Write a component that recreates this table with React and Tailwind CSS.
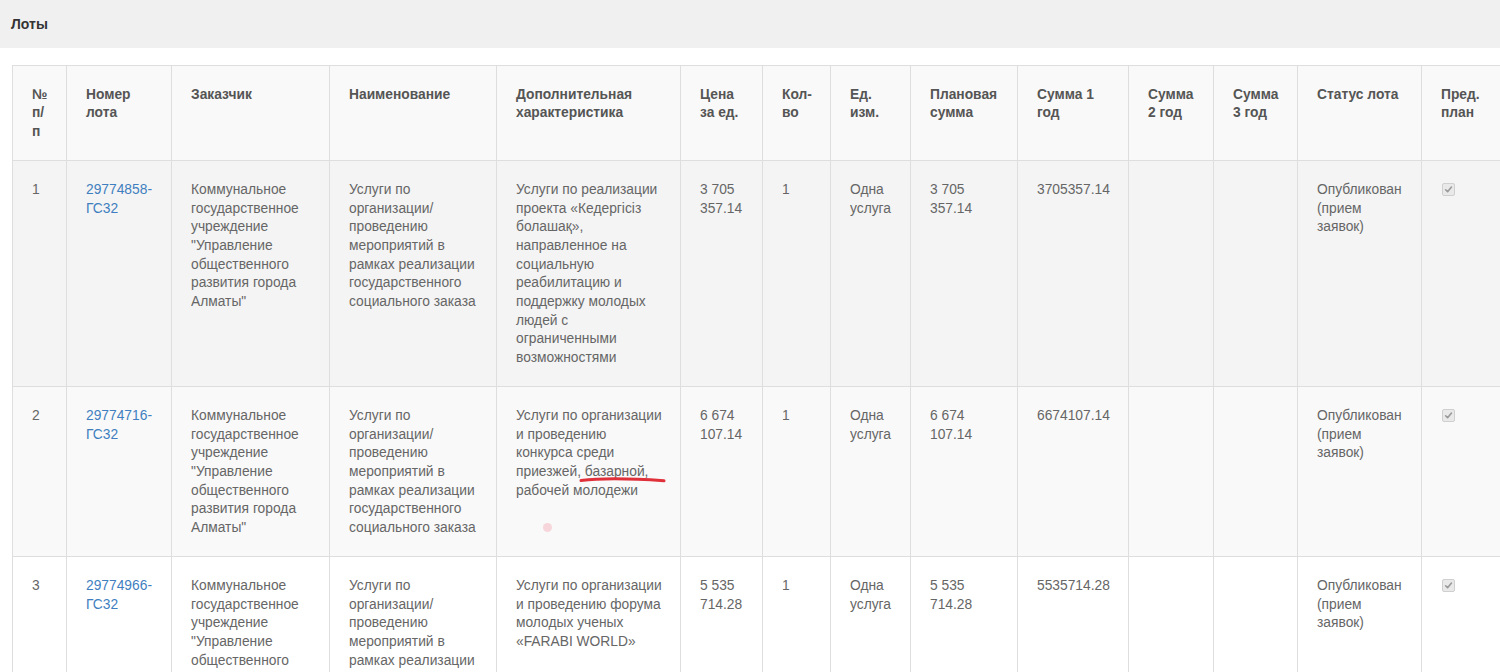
import React from "react";

const cols = [54, 105, 158, 167, 184, 82, 68, 80, 107, 111, 85, 84, 124, 90];

const headers = [
  ["№", "п/", "п"],
  ["Номер", "лота"],
  ["Заказчик"],
  ["Наименование"],
  ["Дополнительная", "характеристика"],
  ["Цена", "за ед."],
  ["Кол-", "во"],
  ["Ед.", "изм."],
  ["Плановая", "сумма"],
  ["Сумма 1", "год"],
  ["Сумма", "2 год"],
  ["Сумма", "3 год"],
  ["Статус лота"],
  ["Пред.", "план"],
];

const customer = [
  "Коммунальное",
  "государственное",
  "учреждение",
  '"Управление',
  "общественного",
  "развития города",
  'Алматы"',
];
const name = [
  "Услуги по",
  "организации/",
  "проведению",
  "мероприятий в",
  "рамках реализации",
  "государственного",
  "социального заказа",
];
const status = ["Опубликован", "(прием", "заявок)"];

const rows = [
  {
    n: "1",
    lot: ["29774858-", "ГС32"],
    extra: [
      "Услуги по реализации",
      "проекта «Кедергісіз",
      "болашақ»,",
      "направленное на",
      "социальную",
      "реабилитацию и",
      "поддержку молодых",
      "людей с",
      "ограниченными",
      "возможностями",
    ],
    price: ["3 705", "357.14"],
    sum1: "3705357.14",
    bg: "bg-[#f4f4f4]",
  },
  {
    n: "2",
    lot: ["29774716-", "ГС32"],
    extra: [
      "Услуги по организации",
      "и проведению",
      "конкурса среди",
      "приезжей, базарной,",
      "рабочей молодежи",
    ],
    price: ["6 674", "107.14"],
    sum1: "6674107.14",
    bg: "bg-[#f9f9f9]",
  },
  {
    n: "3",
    lot: ["29774966-", "ГС32"],
    extra: [
      "Услуги по организации",
      "и проведению форума",
      "молодых ученых",
      "«FARABI WORLD»",
    ],
    price: ["5 535", "714.28"],
    sum1: "5535714.28",
    bg: "bg-white",
  },
];

function Lines({ lines }) {
  return (
    <>
      {lines.map((l, i) => (
        <div key={i} className="whitespace-nowrap">
          {l}
        </div>
      ))}
    </>
  );
}

function Check() {
  return (
    <span className="ml-[1px] mt-[2px] inline-flex h-[13px] w-[13px] items-center justify-center rounded-[2px] border border-[#cfcfcf] bg-[#e9e9e9] align-top">
      <svg width="9" height="9" viewBox="0 0 10 10">
        <path d="M1.8 5.3 L4 7.4 L8.3 2.3" fill="none" stroke="#9a9a9a" strokeWidth="1.8" strokeLinecap="round" strokeLinejoin="round" />
      </svg>
    </span>
  );
}

const td = "border border-[#dedede] px-[19px] pt-[19.6px] pb-[18.7px] align-top";

export default function App() {
  return (
    <div className="relative w-full overflow-hidden bg-white text-[13.8px] leading-[18.67px] text-[#666]" style={{ fontFamily: '"Liberation Sans", Arial, sans-serif' }}>
      <div className="flex h-[48px] items-center bg-[#f0f0f0] px-[11px]">
        <span className="text-[14px] font-bold text-[#333]">Лоты</span>
      </div>
      <div className="pl-[12px] pt-[17px]">
        <table className="table-fixed border-collapse" style={{ width: cols.reduce((a, b) => a + b, 0) }}>
          <colgroup>
            {cols.map((w, i) => (
              <col key={i} style={{ width: w }} />
            ))}
          </colgroup>
          <thead>
            <tr className="bg-[#f9f9f9]">
              {headers.map((h, i) => (
                <th key={i} className={`${td} text-left font-bold text-[#555]`}>
                  <Lines lines={h} />
                </th>
              ))}
            </tr>
          </thead>
          <tbody>
            {rows.map((r, ri) => (
              <tr key={ri} className={r.bg}>
                <td className={td}>{r.n}</td>
                <td className={`${td} text-[#3f7fbf]`}>
                  <Lines lines={r.lot} />
                </td>
                <td className={td}>
                  <Lines lines={customer} />
                </td>
                <td className={td}>
                  <Lines lines={name} />
                </td>
                <td className={td}>
                  <Lines lines={r.extra} />
                </td>
                <td className={td}>
                  <Lines lines={r.price} />
                </td>
                <td className={td}>1</td>
                <td className={td}>
                  <Lines lines={["Одна", "услуга"]} />
                </td>
                <td className={td}>
                  <Lines lines={r.price} />
                </td>
                <td className={td}>{r.sum1}</td>
                <td className={td}></td>
                <td className={td}></td>
                <td className={td}>
                  <Lines lines={status} />
                </td>
                <td className={td}>
                  <Check />
                </td>
              </tr>
            ))}
          </tbody>
        </table>
      </div>
      <svg className="pointer-events-none absolute left-[578px] top-[473px]" width="92" height="14" viewBox="0 0 92 14">
        <path d="M3 7.5 C 20 5.5, 45 5, 86 7.8" fill="none" stroke="#e0303a" strokeWidth="3" strokeLinecap="round" />
      </svg>
      <span className="pointer-events-none absolute left-[543px] top-[523px] h-[9px] w-[9px] rounded-full bg-[#f6d6da]" />
    </div>
  );
}
